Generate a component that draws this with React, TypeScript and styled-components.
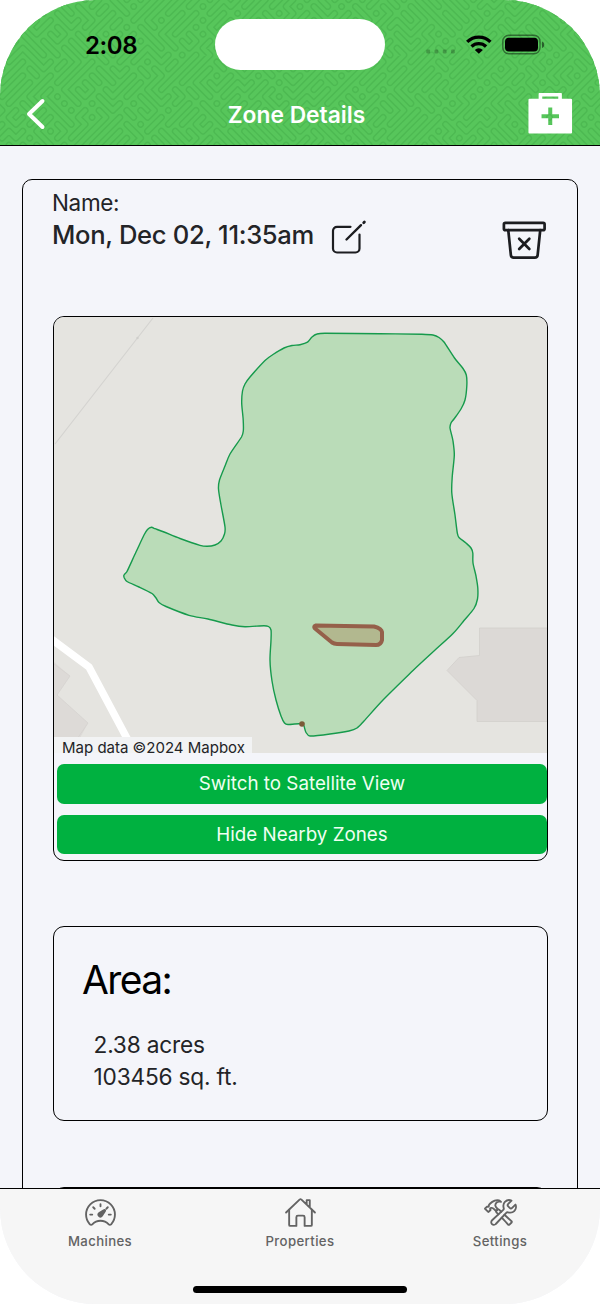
import React from "react";
import styled, { createGlobalStyle } from "styled-components";
import {
  IoConstructOutline,
  IoHomeOutline,
  IoMedkitSharp,
  IoSpeedometerOutline,
  IoTrashBinOutline,
} from "react-icons/io5";

const GlobalStyle = createGlobalStyle`
  *, *::before, *::after { box-sizing: border-box; }
  body { margin: 0; background: #fff; }
`;

const Shell = styled.div`
  width: 600px;
  height: 1304px;
  display: flex;
  flex-direction: column;
  overflow: hidden;
  border-radius: 96px;
  background: #f4f5fa;
  color: #232427;
  font-family: Inter, "Liberation Sans", sans-serif;
`;

const Header = styled.header`
  flex: none;
  height: 146px;
  display: grid;
  grid-template: 146px / 600px;
  border-bottom: 1px solid #000;
  background: #57c65b;
  overflow: hidden;
`;

const PatternSvg = styled.svg`
  grid-area: 1 / 1;
  display: block;
`;

const HeaderContent = styled.div`
  grid-area: 1 / 1;
  z-index: 1;
`;

const StatusBar = styled.div`
  height: 89px;
  display: grid;
  grid-template-columns: 215px 170px 215px;
  align-items: center;
`;

const Clock = styled.span`
  padding-left: 85px;
  color: #000;
  font-size: 24px;
  font-weight: 600;
  letter-spacing: -0.4px;
  line-height: 30px;
  padding-top: 2px;
`;

const Island = styled.div`
  height: 51px;
  border-radius: 26px;
  background: #fff;
`;

const StatusIcons = styled.div`
  display: flex;
  align-items: center;
  padding-left: 41px;
`;

const TitleBar = styled.div`
  height: 57px;
  display: grid;
  grid-template-columns: 200px 193px 1fr;
  align-items: center;
`;

const BackButton = styled.button`
  border: 0;
  padding: 0 0 8px 25px;
  background: none;
  display: flex;
`;

const Title = styled.h1`
  margin: 0;
  padding-bottom: 5px;
  color: #fff;
  font-size: 22.8px;
  font-weight: 600;
  line-height: 30px;
  text-align: center;
  white-space: nowrap;
`;

const MedkitButton = styled.button`
  border: 0;
  padding: 0 26.5px 9px 0;
  background: none;
  color: #fff;
  display: flex;
  justify-content: flex-end;
`;

const Main = styled.main`
  flex: 1;
  min-height: 0;
  overflow: hidden;
  padding: 33px 22px 0;
`;

const DetailCard = styled.section`
  height: 1060px;
  padding: 0 29px 0 30px;
  border: 1px solid #000;
  border-radius: 10px;
`;

const NameBlock = styled.div`
  height: 136px;
  display: flex;
  justify-content: space-between;
  margin-left: -1px;
`;

const NameLabel = styled.div`
  padding-top: 8px;
  font-size: 22.5px;
  letter-spacing: -0.35px;
  line-height: 30px;
`;

const NameRow = styled.div`
  display: flex;
  align-items: flex-start;
  gap: 17px;
`;

const NameValue = styled.span`
  font-size: 25.6px;
  font-weight: 500;
  letter-spacing: -0.32px;
  line-height: 34px;
  white-space: nowrap;
`;

const IconButton = styled.button<{ $top?: number }>`
  border: 0;
  padding: ${({ $top = 0 }) => $top}px 0 0;
  background: none;
  color: #1c1d20;
  display: flex;
  align-items: flex-start;
`;

const DeleteButton = styled(IconButton)`
  margin-right: 0.5px;

  svg * {
    stroke-width: 30px;
  }
`;

const Panel = styled.section<{ $height: number; $gap?: number }>`
  height: ${({ $height }) => $height}px;
  margin-bottom: ${({ $gap = 0 }) => $gap}px;
  border: 1px solid #000;
  border-radius: 11px;
  overflow: hidden;
`;

const MapView = styled.div`
  height: 436px;
  display: grid;
  grid-template: 436px / 493px;
`;

const MapSvg = styled.svg`
  grid-area: 1 / 1;
  display: block;
`;

const Attribution = styled.span`
  grid-area: 1 / 1;
  align-self: end;
  justify-self: start;
  width: 198px;
  height: 16px;
  padding-left: 8px;
  background: #f2f3f4;
  font-size: 15px;
  line-height: 22px;
  white-space: nowrap;
  z-index: 1;
`;

const MapActions = styled.div`
  display: flex;
  flex-direction: column;
  gap: 11px;
  padding: 11px 0 0 3px;
`;

const ActionButton = styled.button`
  width: 490px;
  height: 39.5px;
  border: 0;
  border-radius: 7px;
  background: #00b140;
  color: #effff2;
  font: 400 18.8px/40px Inter, "Liberation Sans", sans-serif;
  padding: 0;
`;

const AreaTitle = styled.h2`
  margin: 30px 0 0 28px;
  color: #000;
  font-size: 39px;
  font-weight: 400;
  letter-spacing: -1.6px;
  line-height: 46px;
`;

const AreaValue = styled.div`
  padding-left: 39.5px;
  font-size: 22.7px;
  letter-spacing: -0.2px;
  line-height: 31.5px;
`;

const AreaValues = styled.div`
  padding-top: 26px;
`;

const TabBar = styled.nav`
  flex: none;
  height: 116px;
  border-top: 1px solid #000;
  background: #f6f6f6;
`;

const Tabs = styled.div`
  height: 93px;
  display: grid;
  grid-template-columns: repeat(3, 200px);
`;

const Tab = styled.a`
  display: flex;
  flex-direction: column;
  align-items: center;
  padding-top: 7px;
  color: #636363;

  svg * {
    stroke-width: 29px;
  }
`;

const TabLabel = styled.span`
  margin-top: 3px;
  font-size: 13.2px;
  font-weight: 500;
  letter-spacing: 0.38px;
  line-height: 18px;
`;

const HomeIndicator = styled.div`
  width: 214px;
  height: 7px;
  margin: 4px auto 0;
  border-radius: 4px;
  background: #000;
`;

type Point = [number, number];

/* Closed outline that runs smoothly through every vertex. */
function smoothPath(points: Point[]): string {
  const n = points.length;
  const t = 0.15;
  let d = `M${points[0][0]} ${points[0][1]}`;
  for (let i = 0; i < n; i++) {
    const a = points[(i + n - 1) % n];
    const b = points[i];
    const c = points[(i + 1) % n];
    const e = points[(i + 2) % n];
    const len = Math.hypot(c[0] - b[0], c[1] - b[1]);
    const before = Math.hypot(c[0] - a[0], c[1] - a[1]);
    const after = Math.hypot(e[0] - b[0], e[1] - b[1]);
    const k1 = Math.min(t * before, len / 3) / before;
    const k2 = Math.min(t * after, len / 3) / after;
    d += `C${(b[0] + (c[0] - a[0]) * k1).toFixed(1)} ${(b[1] + (c[1] - a[1]) * k1).toFixed(1)} ${(c[0] - (e[0] - b[0]) * k2).toFixed(1)} ${(c[1] - (e[1] - b[1]) * k2).toFixed(1)} ${c[0]} ${c[1]}`;
  }
  return d + "Z";
}

const zone: Point[] = [
  [300, 344.7], [292, 345.5], [284, 348], [273, 354.5], [265, 360.5], [250, 377], [245, 384], [242.5, 391], [241.7, 403],
  [243.2, 420], [243.3, 431], [241.5, 437], [230, 454], [225, 466], [219.5, 480], [218.5, 489], [221, 505], [225, 527],
  [224.5, 534], [221, 541], [215, 545], [207, 546.3], [200, 545.3], [180, 538.5], [164, 532], [155, 528.7], [151.5, 527.3],
  [147.5, 529.5], [144, 535], [136, 552], [127, 571.5], [124, 575], [124.3, 578], [127, 581.5], [139, 587], [152, 593.5],
  [156, 598], [159, 602.5], [166, 606.5], [189, 615.3], [208, 619], [232, 625], [245, 626.7], [264, 625.7],
  [268.5, 626.5], [271, 630], [271, 640], [270, 660], [272, 681], [276, 700], [281, 716], [284.5, 723], [288, 724.5],
  [302, 723.5], [304, 726], [306, 732.5], [310, 736], [330, 734], [349, 731], [357, 728], [364, 721], [383, 700], [413, 670.5],
  [434, 651], [453, 633.5], [464, 620.5], [474, 608.5], [477.5, 599], [477.8, 588], [476, 576], [473, 563], [472.8, 553],
  [471, 548], [466, 543], [459, 537.5], [457.3, 533], [455, 515], [451.8, 493], [452.3, 476], [454.3, 455], [453, 441],
  [450, 428], [451, 423], [454, 419], [461, 409], [465, 400], [466.8, 386], [466.3, 375], [463, 368.5], [454.5, 358],
  [444, 342], [439, 337.5], [433, 335], [422, 334.2], [380, 333.8], [325, 333.2], [317, 334], [312, 337], [307.5, 342.2],
];

/* Diagonal labyrinth: capsules laid along a 45 degree grid, each turning once or twice. */
function labyrinth(): string {
  const step = 9.8;
  const cols = 90;
  const rows = 90;
  let seed = 4711;
  const rand = () => {
    seed = (seed * 1664525 + 1013904223) % 4294967296;
    return seed / 4294967296;
  };
  const used = new Set<number>();
  const dirs: Point[] = [[1, 0], [0, 1], [-1, 0], [0, -1]];
  const at = (v: number) => (v * step).toFixed(1);
  const parts: string[] = [];
  for (let r = 0; r < rows; r++) {
    for (let c = 0; c < cols; c++) {
      if (used.has(r * cols + c)) continue;
      let x = c;
      let y = r;
      used.add(y * cols + x);
      let d = `M${at(x)} ${at(y)}`;
      let dir = Math.floor(rand() * 4);
      const length = 2 + Math.floor(rand() * 6);
      for (let i = 0; i < length; i++) {
        if (rand() < 0.42) dir = (dir + (rand() < 0.5 ? 1 : 3)) % 4;
        const nx = x + dirs[dir][0];
        const ny = y + dirs[dir][1];
        if (nx < 0 || ny < 0 || nx >= cols || ny >= rows || used.has(ny * cols + nx)) {
          dir = (dir + 1) % 4;
          continue;
        }
        x = nx;
        y = ny;
        used.add(y * cols + x);
        d += `L${at(x)} ${at(y)}`;
      }
      parts.push(d + "h0.01");
    }
  }
  return parts.join("");
}

const maze = labyrinth();

const Pattern = () => (
  <PatternSvg width="600" height="146" viewBox="0 0 600 146" aria-hidden="true">
    <g transform="translate(300 -340) rotate(45)" fill="none" strokeLinecap="round" strokeLinejoin="round">
      <path d={maze} stroke="#4db952" strokeWidth="6.800" />
      <path d={maze} stroke="#57c65b" strokeWidth="4" />
    </g>
  </PatternSvg>
);

const StatusGlyphs = () => (
  <svg width="120" height="24" viewBox="426 32.500 120 24" aria-hidden="true">
    <g fill="#000" opacity=".22">
      <rect x="426.300" y="49" width="3.800" height="4" rx="1.2" />
      <rect x="434.500" y="49" width="3.800" height="4" rx="1.2" />
      <rect x="442.800" y="49" width="3.800" height="4" rx="1.2" />
      <rect x="451" y="49" width="3.800" height="4" rx="1.2" />
    </g>
    <g fill="none" stroke="#000" strokeWidth="3.3">
      <path d="M467.2 41.3a16.5 16.5 0 0 1 23.2 0" />
      <path d="M471.5 46a10.5 10.5 0 0 1 14.6 0" />
    </g>
    <path d="M474.8 49.4a5.8 5.8 0 0 1 8 0l-4 3.9z" />
    <rect x="502.8" y="34.8" width="37.2" height="18.4" rx="6" fill="none" stroke="#000" strokeOpacity=".45" strokeWidth="1.4" />
    <rect x="505" y="37.3" width="33" height="13.6" rx="4" />
    <path d="M542 41c3 .8 3 5.600 0 6.400z" opacity=".5" />
  </svg>
);

const EditIcon = () => (
  <svg width="36" height="36" viewBox="0 0 36 36" fill="none" stroke="currentColor" strokeWidth="2.2" strokeLinecap="round" strokeLinejoin="round">
    <path d="M19.500 6.800H6a4 4 0 0 0-4 4V28.500a4 4 0 0 0 4 4H24.500a4 4 0 0 0 4-4V14.500" />
    <path d="M15.500 19.500L30 5.200" strokeWidth="2.400" />
    <path d="M32.700 2.700l.7-.7" strokeWidth="2.800" />
  </svg>
);

const MapArtwork = () => (
  <MapSvg width="493" height="436" viewBox="54 317 493 436" role="img" aria-label="Zone map">
    <rect x="54" y="317" width="493" height="436" fill="#e5e4e0" />
    <path d="M55 444L153 318" stroke="#d4d3d0" strokeWidth="1.2" />
    <circle cx="137.500" cy="338" r="1.2" fill="#cfcecb" />
    <path d="M54 662l16 14-13 19 31 28-16 30H54z" fill="#dddad7" />
    <path d="M54 664l16 12-13 19 31 28-11 16" fill="none" stroke="#d4d1ce" strokeWidth=".7" />
    <path d="M548 628h-68.500v27.500l-20.500 2-12 13 30 30v21h71z" fill="#dcd9d6" stroke="#d2cfcc" strokeWidth=".8" />
    <path d="M50 638L89 667L130 744" fill="none" stroke="#fff" strokeWidth="7.500" strokeLinejoin="round" />
    <path d={smoothPath(zone)} fill="#badcb8" stroke="#169a4c" strokeWidth="1.4" />
    <path
      d="M316 625.500q-3 1-1 3l17 14q2 1.400 5 1.500l39 1q5 0 6-5v-8q-.5-3.500-8-5.500z"
      fill="#b2b88f"
      stroke="#95604a"
      strokeWidth="4"
      strokeLinejoin="round"
    />
    <circle cx="302" cy="724" r="2.800" fill="#7b5a38" />
  </MapSvg>
);

const tabs = [
  { label: "Machines", Icon: IoSpeedometerOutline },
  { label: "Properties", Icon: IoHomeOutline },
  { label: "Settings", Icon: IoConstructOutline },
];

export default function App() {
  return (
    <>
      <GlobalStyle />
      <Shell>
        <Header>
          <Pattern />
          <HeaderContent>
            <StatusBar>
              <Clock>2:08</Clock>
              <Island />
              <StatusIcons>
                <StatusGlyphs />
              </StatusIcons>
            </StatusBar>
            <TitleBar>
              <BackButton aria-label="Back">
                <svg width="22" height="32" viewBox="0 0 22 32" fill="none" stroke="#fff" strokeWidth="4" strokeLinecap="round" strokeLinejoin="round">
                  <path d="M17.500 3L4 16L17.500 29" />
                </svg>
              </BackButton>
              <Title>Zone Details</Title>
              <MedkitButton aria-label="Diagnostics">
                <IoMedkitSharp size={46.5} />
              </MedkitButton>
            </TitleBar>
          </HeaderContent>
        </Header>
        <Main>
          <DetailCard>
            <NameBlock>
              <div>
                <NameLabel>Name:</NameLabel>
                <NameRow>
                  <NameValue>Mon, Dec 02, 11:35am</NameValue>
                  <IconButton aria-label="Edit name" $top={2}>
                    <EditIcon />
                  </IconButton>
                </NameRow>
              </div>
              <DeleteButton aria-label="Delete zone" $top={37}>
                <IoTrashBinOutline size={46.5} />
              </DeleteButton>
            </NameBlock>
            <Panel $height={545} $gap={65}>
              <MapView>
                <MapArtwork />
                <Attribution>Map data ©2024 Mapbox</Attribution>
              </MapView>
              <MapActions>
                <ActionButton>Switch to Satellite View</ActionButton>
                <ActionButton>Hide Nearby Zones</ActionButton>
              </MapActions>
            </Panel>
            <Panel $height={195} $gap={66}>
              <AreaTitle>Area:</AreaTitle>
              <AreaValues>
                <AreaValue>2.38 acres</AreaValue>
                <AreaValue>103456 sq. ft.</AreaValue>
              </AreaValues>
            </Panel>
            <Panel $height={120} />
          </DetailCard>
        </Main>
        <TabBar>
          <Tabs>
            {tabs.map(({ label, Icon }) => (
              <Tab key={label}>
                <Icon size={33} />
                <TabLabel>{label}</TabLabel>
              </Tab>
            ))}
          </Tabs>
          <HomeIndicator />
        </TabBar>
      </Shell>
    </>
  );
}
